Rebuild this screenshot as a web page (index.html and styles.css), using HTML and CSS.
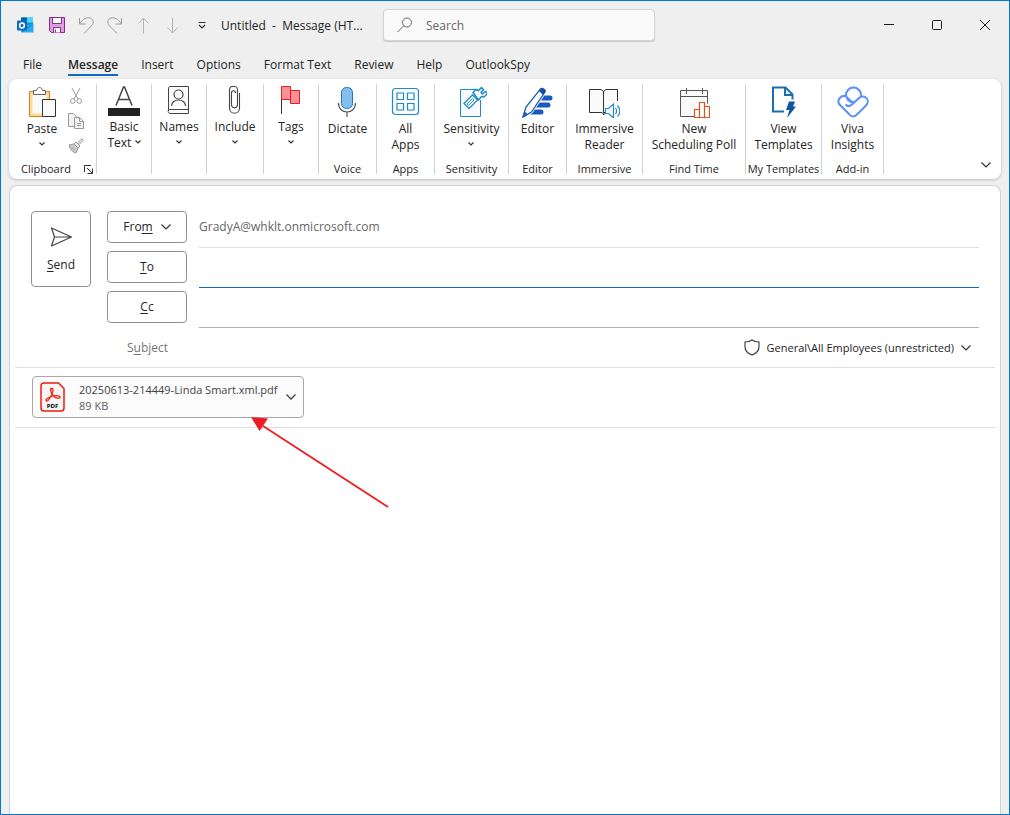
FILE: index.html
```html
<!DOCTYPE html>
<html lang="en">
  <head>
    <meta charset="utf-8">
    <meta name="viewport" content="width=device-width, initial-scale=1">
    <title>Untitled - Message (HTML)</title>
    <link rel="stylesheet" href="styles.css">
  </head>
  <body>
    <div class="window">
      <header class="titlebar">
        <div class="quick-access">
          <span class="app-logo">
            <svg width="17" height="17" viewBox="0 0 17 17">
              <path d="M4 0.5h12v9H4z" fill="#1490df"/>
              <path d="M10 0.5h6v5h-6z" fill="#50d9ff"/>
              <path d="M4 0.5h6v4H4z" fill="#0a5ea8"/>
              <path d="M16.500 7v8.500h-12V9z" fill="#28a8ea"/>
              <path d="M16.500 7l-12 8.500V9l6 1z" fill="#0f78d4"/>
              <rect x="0" y="3.500" width="10" height="10" rx="1" fill="#0f6cbd"/>
              <ellipse cx="5" cy="8.500" rx="2.300" ry="2.500" fill="none" stroke="#fff" stroke-width="1.500"/>
            </svg>
          </span>
          <button class="tool" aria-label="Save">
            <svg width="16" height="16" viewBox="0 0 16 16">
              <path d="M.5.5h15v15h-13l-2-2z" fill="#d9a0de" stroke="#92278f"/>
              <path d="M3.500.5h9v6h-9zM4.500 15.500v-5h7v5" fill="#fff" stroke="#92278f"/>
              <path d="M6.500 12.500v3" stroke="#92278f"/>
            </svg>
          </button>
          <button class="tool" aria-label="Undo">
            <svg width="16" height="17" viewBox="0 0 16 17" fill="none" stroke="#9a9a9a">
              <path d="M1.500 1v6h6M1.500 7C4 3 7 .8 10.500.8c5 0 6 5 3 8L6 16.500"/>
            </svg>
          </button>
          <button class="tool" aria-label="Redo">
            <svg width="16" height="17" viewBox="0 0 16 17" fill="none" stroke="#9a9a9a">
              <path d="M14.500 1v6h-6M14.500 7C12 3 9 .8 5.500.8c-5 0-6 5-3 8L10 16.500"/>
            </svg>
          </button>
          <button class="tool" aria-label="Previous item">
            <svg width="12" height="17" viewBox="0 0 12 17" fill="none" stroke="#b4b4b4">
              <path d="M5.500 16.500V1M.5 6.500l5-5.500 5 5.500"/>
            </svg>
          </button>
          <button class="tool" aria-label="Next item">
            <svg width="12" height="17" viewBox="0 0 12 17" fill="none" stroke="#b4b4b4">
              <path d="M5.500.5V16M.5 10.500l5 5.500 5-5.500"/>
            </svg>
          </button>
          <button class="tool" aria-label="Customize quick access toolbar">
            <svg width="8" height="7" viewBox="0 0 8 7" fill="none" stroke="#333" stroke-width="1.200">
              <path d="M.5.500h7M1 3l3 3 3-3"/>
            </svg>
          </button>
        </div>
        <h1 class="window-title">Untitled&nbsp; -&nbsp; Message (HT...</h1>
        <label class="search">
          <svg width="16" height="16" viewBox="0 0 16 16" fill="none" stroke="#666">
            <circle cx="10" cy="5.500" r="4.500"/>
            <path d="M6.800 8.700L.7 15"/>
          </svg>
          <input type="search" placeholder="Search" aria-label="Search">
        </label>
        <div class="window-controls">
          <button aria-label="Minimize">
            <svg width="10" height="10" viewBox="0 0 10 10" stroke="#1a1a1a"><path d="M0 4.500h10"/></svg>
          </button>
          <button aria-label="Maximize">
            <svg width="10" height="10" viewBox="0 0 10 10" fill="none" stroke="#1a1a1a"><rect x=".5" y=".5" width="9" height="9" rx="1"/></svg>
          </button>
          <button aria-label="Close">
            <svg width="10" height="10" viewBox="0 0 10 10" stroke="#1a1a1a"><path d="M0 0l10 10M10 0L0 10"/></svg>
          </button>
        </div>
      </header>

      <nav class="tabs">
        <button class="tab">File</button>
        <button class="tab active">Message</button>
        <button class="tab">Insert</button>
        <button class="tab">Options</button>
        <button class="tab">Format Text</button>
        <button class="tab">Review</button>
        <button class="tab">Help</button>
        <button class="tab">OutlookSpy</button>
      </nav>

      <section class="ribbon">
        <div class="group">
          <div class="clipboard">
            <button class="command">
              <svg width="30" height="32" viewBox="0 0 30 32">
                <path d="M2.500 5.500h20v25h-20z" fill="#fbdc96" stroke="#e07b1a"/>
                <path d="M5.500 8.500h14v19h-14z" fill="#fafafa"/>
                <path d="M6.500 8.500v-4h3c.5-4 5.500-4 6 0h3v4z" fill="#fff" stroke="#666"/>
                <path d="M15.500 13.500h13v17h-13z" fill="#fafafa" stroke="#333"/>
              </svg>
              <span class="label">Paste</span>
              <svg class="caret" viewBox="0 0 6 4"><path d="M.5.5L3 3 5.500.5"/></svg>
            </button>
            <div class="clipboard-tools">
              <button class="small" aria-label="Cut">
                <svg width="16" height="16" viewBox="0 0 16 16" fill="none" stroke="#999">
                  <path d="M4 0l6 11M12 0L6 11"/><circle cx="4.800" cy="13" r="2.300"/><circle cx="11.200" cy="13" r="2.300"/>
                </svg>
              </button>
              <button class="small" aria-label="Copy">
                <svg width="16" height="16" viewBox="0 0 16 16" fill="#f3f3f3" stroke="#999">
                  <path d="M6.500 13.500h-6V.5h5l3 3v1"/><path d="M6.500 4.500h5l4 4v7h-9zM11.500 4.500v4h4M9 10.500h4M9 12.500h4" />
                </svg>
              </button>
              <button class="small" aria-label="Format Painter">
                <svg width="16" height="16" viewBox="0 0 16 16" fill="#ccc" stroke="#999">
                  <path d="M1 7l5-1 4 4-2 5c-4-1-6-4-7-8z"/><path d="M3.500 9l3 3M6 6l2-2 4 4-2 2zM9.500 5L14 .7l1.300 1.500L11 6.500z" fill="#eee"/>
                </svg>
              </button>
            </div>
          </div>
          <div class="caption with-launcher">Clipboard
            <button class="launcher" aria-label="Clipboard options">
              <svg width="9" height="9" viewBox="0 0 9 9" fill="none" stroke="#333"><path d="M.5 7V.5H7M3 3l5 5M8.500 3.500v5h-5"/></svg>
            </button>
          </div>
        </div>

        <div class="group compact">
          <button class="command">
            <svg width="32" height="32" viewBox="0 0 32 32">
              <path d="M8 21.500L15.500 3h1L24 21.500M10.500 15.500h11" fill="none" stroke="#444" stroke-width="1.500"/>
              <path d="M0 24h32v8H0z" fill="#222"/>
            </svg>
            <span class="label">Basic<br>Text <svg class="caret" viewBox="0 0 6 4"><path d="M.5.5L3 3 5.500.5"/></svg></span>
          </button>
        </div>

        <div class="group compact">
          <button class="command">
            <svg width="32" height="32" viewBox="0 0 32 32" fill="#fafafa" stroke="#444">
              <path d="M7 2.500h18.500v27H7C4.500 29.500 4.500 25.500 7 25.500h18.500M5.500 27V4c0-1 .5-1.500 1.500-1.500"/>
              <circle cx="15.500" cy="10.500" r="4.500" stroke-width="1.200"/><path d="M8.500 22c0-8 14-8 14 0" stroke-width="1.200"/>
            </svg>
            <span class="label">Names</span>
            <svg class="caret" viewBox="0 0 6 4"><path d="M.5.5L3 3 5.500.5"/></svg>
          </button>
        </div>

        <div class="group compact">
          <button class="command">
            <svg width="32" height="32" viewBox="0 0 32 32" fill="none" stroke="#444" stroke-width="1.100">
              <path d="M18.500 11v9c0 5-6 5-6 0V7.500M10.500 12v12c0 7 10 7 10 0V9M18.500 13V6c0-5-8-5-8 0v8M12.500 9c0-3 4-3 4 0"/>
            </svg>
            <span class="label">Include</span>
            <svg class="caret" viewBox="0 0 6 4"><path d="M.5.5L3 3 5.500.5"/></svg>
          </button>
        </div>

        <div class="group compact">
          <button class="command">
            <svg width="32" height="32" viewBox="0 0 32 32">
              <path d="M6.500 3v27" stroke="#333"/>
              <path d="M6.500 2.500h9v13h-9zM15.500 6.500h9v13h-9v-4z" fill="#ff8f94" stroke="#d6241f"/>
            </svg>
            <span class="label">Tags</span>
            <svg class="caret" viewBox="0 0 6 4"><path d="M.5.5L3 3 5.500.5"/></svg>
          </button>
        </div>

        <div class="group">
          <button class="command">
            <svg width="32" height="32" viewBox="0 0 32 32">
              <rect x="10.500" y="1.500" width="11" height="21" rx="5" fill="#83beec" stroke="#1c78c8"/>
              <path d="M7.500 17c0 12 17 12 17 0M16 26v5" fill="none" stroke="#555" stroke-width="1.200"/>
            </svg>
            <span class="label">Dictate</span>
          </button>
          <div class="caption">Voice</div>
        </div>

        <div class="group">
          <button class="command">
            <svg width="32" height="32" viewBox="0 0 32 32" fill="#fafafa" stroke="#1e8bcd" stroke-width="1.200">
              <rect x="2.500" y="2.500" width="26" height="26" rx="3"/>
              <path d="M7 7h6.500v6.500H7zM17.500 7H24v6.500h-6.500zM7 17.500h6.500V24H7zM17.500 17.500H24V24h-6.500z"/>
            </svg>
            <span class="label">All<br>Apps</span>
          </button>
          <div class="caption">Apps</div>
        </div>

        <div class="group">
          <button class="command">
            <svg width="32" height="32" viewBox="0 0 32 32" fill="#fafafa" stroke="#1e8bcd">
              <path d="M5.500 3.500h20v27h-20z"/>
              <path d="M23 2l9 0v12h-7l-6-4z" fill="#fff" stroke="none"/>
              <path d="M9 17.500L17.500 9l5 5-8.500 8.500z" fill="#fff" stroke-width="1.300"/>
              <path d="M12 18l5.500-5.500 1.500 1.500-5.500 5.500z"/>
              <path d="M18 6.500L21 3.500l2.500 1 3-3 2 2-2.500 3 1.500 1.500 3-2.500 2 2-3.500 3.500-2.500-.5-3 3.500z" fill="#fff" stroke-width="1.500"/>
            </svg>
            <span class="label">Sensitivity</span>
            <svg class="caret" viewBox="0 0 6 4"><path d="M.5.5L3 3 5.500.5"/></svg>
          </button>
          <div class="caption">Sensitivity</div>
        </div>

        <div class="group">
          <button class="command">
            <svg width="32" height="32" viewBox="0 0 32 32">
              <path d="M17 12h12M14 19h13M10 26h10" stroke="#185abd" stroke-width="5" stroke-linecap="round"/>
              <path d="M2 31l3-10L19.500 3c1-2 6 1 4.500 3L10.500 26z" fill="#fff" stroke="#fff" stroke-width="3"/>
              <path d="M2 31l3-10L19.500 3c1-2 6 1 4.500 3L10.500 26z" fill="#fff" stroke="#1f5bbd" stroke-width="1.300"/>
              <path d="M18 5l1.500-2c1-2 6 1 4.500 3l-2 3z" fill="#174ea6"/>
              <path d="M2 31l1.500-5 3 2.500z" stroke="#1f5bbd" fill="#1f5bbd"/>
            </svg>
            <span class="label">Editor</span>
          </button>
          <div class="caption">Editor</div>
        </div>

        <div class="group">
          <button class="command">
            <svg width="32" height="32" viewBox="0 0 32 32" fill="#fafafa" stroke="#333">
              <path d="M16 29l-2-2.500H1.500v-23H13l2.500 2 2.500-2h11.500v23H16zM15.500 5.500V27"/>
              <path d="M17 15h15v17H17z" fill="#fff" stroke="none"/>
              <path d="M17.500 22.500h3l5-4.500v14l-5-4.500h-3z" stroke="#1e8bcd" stroke-width="1.200"/>
              <path d="M27.500 22c1.500 2 1.500 4 0 6M29.500 19.500c3 3.500 3 8 0 11" fill="none" stroke="#1e8bcd" stroke-width="1.200"/>
            </svg>
            <span class="label">Immersive<br>Reader</span>
          </button>
          <div class="caption">Immersive</div>
        </div>

        <div class="group">
          <button class="command">
            <svg width="32" height="32" viewBox="0 0 32 32" fill="#fafafa">
              <path d="M16 30.500H2.500v-26h27v13M2.500 10.500h27M8.500 2v6M24.500 2v6" stroke="#555"/>
              <path d="M16.500 31.500v-8h5v-7h5v4h5v11zM21.500 23.500v8M26.500 20.500v11" fill="#fff" stroke="#e2511c" stroke-width="1.200"/>
            </svg>
            <span class="label">New<br>Scheduling Poll</span>
          </button>
          <div class="caption">Find Time</div>
        </div>

        <div class="group">
          <button class="command">
            <svg width="32" height="32" viewBox="0 0 32 32">
              <path d="M17 25.500H6v-24h12.500l7 7v5M18 1.500v7.500h7.500" fill="none" stroke="#1b6db8" stroke-width="2"/>
              <path d="M22 15.500h6l-2 5h3L20 32l2.500-8H19z" fill="#0a56a0"/>
            </svg>
            <span class="label">View<br>Templates</span>
          </button>
          <div class="caption">My Templates</div>
        </div>

        <div class="group">
          <button class="command">
            <svg width="32" height="32" viewBox="0 0 32 32" fill="none" stroke="#5b8ff9" stroke-width="2">
              <circle cx="16.500" cy="9" r="7.500"/>
              <path d="M9.500 10.500c-6-2.500-10.500 4.500-6.500 8.500l9.500 9.500c2 2.500 5 2.500 7.500 0l9-9c5-5-1.500-12-7-7.500L15.500 18c-3 3-5 2.500-7 .5" fill="#fff"/>
              <path d="M9.500 11l6.500 6"/>
            </svg>
            <span class="label">Viva<br>Insights</span>
          </button>
          <div class="caption">Add-in</div>
        </div>

        <button class="collapse" aria-label="Collapse ribbon">
          <svg width="10" height="6" viewBox="0 0 10 6" fill="none" stroke="#333" stroke-width="1.200"><path d="M.5.5L5 5 9.500.5"/></svg>
        </button>
      </section>

      <main class="message">
        <form class="envelope">
          <button type="button" class="outlined send">
            <svg width="23" height="20" viewBox="0 0 23 20" fill="none" stroke="#444" stroke-width="1.200">
              <path d="M1.500 1L21.500 10l-20 9 3-9zM4.500 10h17" stroke-linejoin="round"/>
            </svg>
            <span><u>S</u>end</span>
          </button>
          <button type="button" class="outlined">
            <span>Fro<u>m</u></span>
            <svg width="10" height="6" viewBox="0 0 10 6" fill="none" stroke="#333" stroke-width="1.200"><path d="M.5.5L5 5 9.500.5"/></svg>
          </button>
          <div class="field from">GradyA@whklt.onmicrosoft.com</div>
          <button type="button" class="outlined"><span><u>T</u>o</span></button>
          <input class="field to" type="text" aria-label="To">
          <button type="button" class="outlined"><span><u>C</u>c</span></button>
          <input class="field" type="text" aria-label="Cc">
        </form>

        <div class="subject-row">
          <label for="subject">S<u>u</u>bject</label>
          <input id="subject" type="text">
          <button class="sensitivity">
            <svg width="16" height="17" viewBox="0 0 16 17" fill="none" stroke="#333" stroke-width="1.100">
              <path d="M8 1C6 2.500 3.500 3 1 3v5c0 4 3 6.500 7 8 4-1.500 7-4 7-8V3c-2.500 0-5-.5-7-2z"/>
            </svg>
            General\All Employees (unrestricted)
            <svg width="10" height="6" viewBox="0 0 10 6" fill="none" stroke="#333" stroke-width="1.200"><path d="M.5.5L5 5 9.500.5"/></svg>
          </button>
        </div>

        <div class="attachments">
          <button class="attachment">
            <svg width="26" height="30" viewBox="0 0 26 30">
              <path d="M4 1h14.500L24 6.500V26c0 2-1 3-3 3H4c-2 0-3-1-3-3V4c0-2 1-3 3-3z" fill="#f7f5f5" stroke="#ee1c0c" stroke-width="1.500"/>
              <path d="M11.500 6.500c-2 0-.5 4.500 2 7.500s7 2.500 6.500 1c-.5-2-7-1.500-10 0s-5 3-3.500 4C8.500 20 13.500 10 13 7.500c-.2-.7-.8-1-1.500-1z" fill="none" stroke="#ee1c0c" stroke-width="1.300"/>
              <text x="12.500" y="26" class="pdf-mark">PDF</text>
            </svg>
            <span class="file">
              <span class="file-name">20250613-214449-Linda Smart.xml.pdf</span>
              <span class="file-size">89 KB</span>
            </span>
            <svg width="10" height="6" viewBox="0 0 10 6" fill="none" stroke="#444" stroke-width="1.300"><path d="M.5.5L5 5 9.500.5"/></svg>
          </button>
        </div>

        <div class="body" contenteditable="true" role="textbox" aria-label="Message body"></div>

        <svg class="pointer" width="140" height="92" viewBox="0 0 140 92">
          <path d="M13 9L138 90" stroke="#ee1c25" stroke-width="1.800"/>
          <path d="M1 0l17 1.500L9.500 14z" fill="#ee1c25"/>
        </svg>
      </main>
    </div>
  </body>
</html>
```
FILE: styles.css
```css
* {
  box-sizing: border-box;
}

body {
  margin: 0;
  font-family: "Open Sans", "Noto Sans", sans-serif;
  font-size: 12px;
  line-height: 16px;
  color: #242424;
}

button,
input {
  font: inherit;
  color: inherit;
  background: none;
  border: none;
  padding: 0;
  margin: 0;
  outline: none;
}

svg {
  display: block;
  flex: none;
}

.window {
  display: flex;
  flex-direction: column;
  min-height: 100vh;
  background: #efefef;
  border: 1px solid #0078d4;
}

/* title bar */
.titlebar {
  display: flex;
  align-items: center;
  height: 48px;
}

.quick-access {
  display: flex;
  align-items: center;
  padding-left: 10px;
}

.app-logo,
.tool {
  display: flex;
  align-items: center;
  justify-content: center;
  width: 29px;
  height: 32px;
}

.app-logo {
  margin-right: 2px;
}

.window-title {
  width: 167px;
  margin: 0;
  padding: 2px 0 0 5px;
  font-size: 12px;
  font-weight: 400;
  white-space: nowrap;
}

.search {
  display: flex;
  align-items: center;
  gap: 13px;
  width: 272px;
  height: 32px;
  padding-left: 13px;
  background: #fafafa;
  border: 1px solid #d4d4d4;
  border-radius: 4px;
  box-shadow: 0 1px 1px #c8c8c8;
}

.search input {
  flex: 1;
  min-width: 0;
  padding-top: 2px;
}

.search input::placeholder {
  color: #666;
}

.window-controls {
  display: flex;
  margin-left: auto;
}

.window-controls button {
  display: flex;
  align-items: center;
  justify-content: center;
  width: 48px;
  height: 32px;
}

/* ribbon tabs */
.tabs {
  display: flex;
  gap: 23px;
  height: 30px;
  padding: 6px 22px 3px;
}

.tab {
  border-bottom: 2px solid transparent;
}

.tab:first-child {
  margin-right: 3px;
}

.tab.active {
  font-weight: 600;
  border-color: #0f6cbd;
}

/* ribbon */
.ribbon {
  display: grid;
  grid-template-columns: 88px 55px 55px 57px 55px 58px 58px 74px 58px 76px 103px 76px 62px 1fr;
  height: 100px;
  margin: 0 8px;
  padding: 5px 0;
  background: #fff;
  border-radius: 8px;
  box-shadow: 0 1px 3px #bbb;
}

.group {
  display: flex;
  flex-direction: column;
  align-items: center;
  justify-content: space-between;
  height: 90px;
  padding-top: 2px;
  border-right: 1px solid #d1d1d1;
  white-space: nowrap;
}

.group.compact {
  padding-top: 0;
}

.command {
  display: flex;
  flex-direction: column;
  align-items: center;
}

.label {
  margin-top: 3px;
}

.caret {
  display: inline-block;
  width: 6px;
  height: 4px;
  margin: 5px 0;
  fill: none;
  stroke: #333;
  stroke-width: 1.2;
}

.label .caret {
  margin: 3px 0;
}

.caption {
  font-size: 11px;
  line-height: 10px;
}

.clipboard {
  display: flex;
  gap: 11px;
  padding-left: 6px;
}

.clipboard-tools {
  display: flex;
  flex-direction: column;
  gap: 9px;
  padding-top: 2px;
}

.with-launcher {
  display: flex;
  align-items: center;
  gap: 13px;
  padding-left: 9px;
}

.collapse {
  align-self: end;
  justify-self: end;
  padding: 6px 10px;
}

/* message */
.message {
  position: relative;
  display: flex;
  flex: 1;
  flex-direction: column;
  margin: 6px 8px 0;
  padding: 0 5px;
  background: #fff;
  border: 1px solid #d1d1d1;
  border-bottom: none;
  border-radius: 8px 8px 0 0;
}

.envelope {
  display: grid;
  grid-template-columns: 60px 80px 1fr;
  grid-auto-rows: 32px;
  gap: 8px 16px;
  padding: 25px 16px 0;
}

.outlined {
  display: flex;
  align-items: center;
  justify-content: center;
  gap: 8px;
  border: 1px solid #919191;
  border-radius: 4px;
}

.outlined u,
.subject-row u {
  text-underline-offset: 2px;
}

.send {
  grid-row: 1 / span 3;
  align-self: start;
  flex-direction: column;
  gap: 10px;
  height: 76px;
  padding-top: 2px;
}

.field {
  height: 37px;
  margin-left: -4px;
  line-height: 32px;
  border-bottom: 1px solid #b0b0b0;
}

.field.from {
  color: #666;
  border-color: #e0e0e0;
}

.field.to {
  border-color: #0f6cbd;
}

.subject-row {
  display: flex;
  align-items: center;
  height: 45px;
  padding: 5px 24px 0 112px;
  border-bottom: 1px solid #e0e0e0;
}

.subject-row label {
  color: #757575;
}

.subject-row input {
  flex: 1;
  min-width: 0;
}

.sensitivity {
  display: flex;
  align-items: center;
  gap: 7px;
  font-size: 11px;
}

.attachments {
  padding: 8px 17px 9px;
  border-bottom: 1px solid #e0e0e0;
}

.attachment {
  display: flex;
  align-items: center;
  gap: 8px;
  height: 42px;
  padding: 0 7px;
  background: #fcfcfc;
  border: 1px solid #a8a8a8;
  border-radius: 4px;
  font-size: 11px;
  text-align: left;
}

.file {
  display: flex;
  flex-direction: column;
  padding: 2px 0 0 5px;
}

.file-name {
  color: #424242;
}

.file-size {
  color: #616161;
}

.pdf-mark {
  font-size: 6px;
  font-weight: 700;
  text-anchor: middle;
}

.body {
  flex: 1;
  outline: none;
}

/* red arrow over the message body */
.pointer {
  position: absolute;
  top: 231px;
  left: 240px;
}
```
